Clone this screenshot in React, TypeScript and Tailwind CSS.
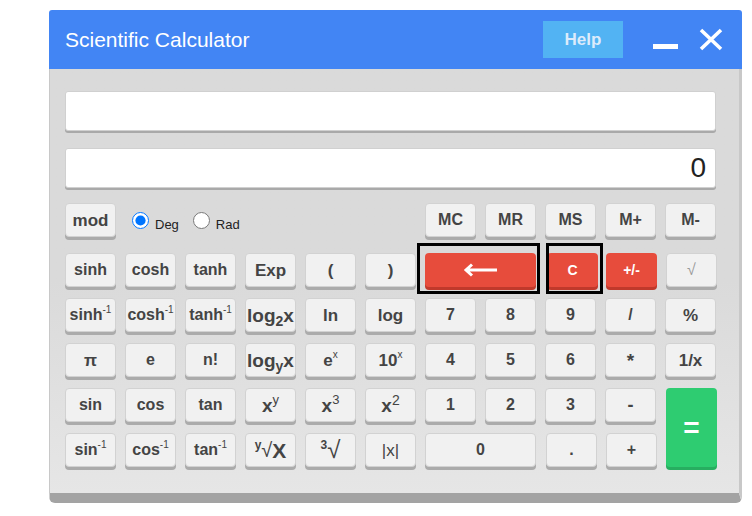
import React from "react";

const key =
  "h-[34px] w-full rounded-[4px] border border-[#d2d2d2] bg-[#f1f1f1] text-[#444] font-bold text-[16px] shadow-[0_3px_0_#ababab] flex items-center justify-center leading-none";

function Key({ children, className = "" }: { children: React.ReactNode; className?: string }) {
  return <button className={`${key} ${className}`}>{children}</button>;
}

function RedKey({ children, className = "" }: { children: React.ReactNode; className?: string }) {
  return (
    <button
      className={`h-[34px] w-full rounded-[4px] bg-[#e74c3c] text-white font-bold text-[14px] shadow-[0_3px_0_#c0392b] flex items-center justify-center leading-none ${className}`}
    >
      {children}
    </button>
  );
}

const Sup = ({ children }: { children: React.ReactNode }) => (
  <sup className="text-[10px] font-normal relative -top-[5px]">{children}</sup>
);

export default function App() {
  return (
    <div className="w-[752px] h-[516px] bg-white font-['Liberation_Sans',Arial,sans-serif] pt-[10px] pl-[49px]">
      <div className="w-[693px] rounded-t-[3px] overflow-hidden">
        {/* title bar */}
        <div className="h-[59px] bg-[#4285f4] flex items-center pl-4 pr-[19px]">
          <h1 className="text-white text-[21px]">Scientific Calculator</h1>
          <button className="ml-auto w-[80px] h-[37px] bg-[#52b3f3] text-[#dcebfb] font-bold text-[17px]">
            Help
          </button>
          <div className="ml-[30px] w-[25px] h-[5px] bg-white mt-[14px]" />
          <svg className="ml-[21px]" width="24" height="23" viewBox="0 0 24 23">
            <path d="M2 2 L22 21 M22 2 L2 21" stroke="white" strokeWidth="3.6" strokeLinecap="butt" />
          </svg>
        </div>

        {/* body */}
        <div className="bg-gradient-to-b from-[#dadada] via-[#dadada] to-[#e6e6e6] border-l border-r-[3px] border-[#c8c8c8] border-b-[10px] border-b-[#a3a3a3] rounded-b-[6px] pl-[15px] pr-[23px] pt-[22px] pb-[26px]">
          <div className="h-[40px] bg-white rounded-[3px] border border-[#d0d0d0] shadow-[0_2px_0_#a9a9a9]" />
          <div className="mt-[17px] h-[40px] bg-white rounded-[3px] border border-[#d0d0d0] shadow-[0_2px_0_#a9a9a9] flex items-center justify-end pr-[9px] text-[28px] text-[#222]">
            0
          </div>

          {/* memory row */}
          <div className="mt-[15px] grid grid-cols-[repeat(11,51px)] gap-x-[9px]">
            <Key className="text-[17px]">mod</Key>
            <div className="col-span-3 flex items-center pl-[7px] text-[13px] text-[#222]">
              <input type="radio" name="unit" defaultChecked className="w-[17px] h-[17px] m-0" />
              <span className="ml-[6px] mt-[9px]">Deg</span>
              <input type="radio" name="unit" className="ml-[14px] w-[17px] h-[17px] m-0" />
              <span className="ml-[6px] mt-[9px]">Rad</span>
            </div>
            <Key className="col-start-7">MC</Key>
            <Key>MR</Key>
            <Key>MS</Key>
            <Key>M+</Key>
            <Key>M-</Key>
          </div>

          {/* main keys */}
          <div className="mt-[16px] grid grid-cols-[repeat(11,51px)] gap-x-[9px] gap-y-[11px]">
            <Key>sinh</Key>
            <Key>cosh</Key>
            <Key>tanh</Key>
            <Key className="text-[17px]">Exp</Key>
            <Key className="text-[17px]">(</Key>
            <Key className="text-[17px]">)</Key>
            <div className="col-span-2 relative">
              <RedKey>
                <svg width="36" height="14" viewBox="0 0 36 14">
                  <path d="M3 7 H34 M9 1.5 L3 7 L9 12.5" stroke="white" strokeWidth="3" fill="none" />
                </svg>
              </RedKey>
              <div className="absolute top-[-10px] bottom-[-7px] left-[-8px] right-[-4px] border-[3px] border-black pointer-events-none" />
            </div>
            <div className="relative">
              <RedKey className="ml-[2px] w-[52px]">C</RedKey>
              <div className="absolute top-[-10px] bottom-[-7px] left-[1px] right-[-7px] border-[3px] border-black pointer-events-none" />
            </div>
            <RedKey className="ml-[1px]">+/-</RedKey>
            <Key className="ml-[1px] font-normal text-[#999] text-[15px]">√</Key>

            <Key className="text-[15px]">
              sinh<Sup>-1</Sup>
            </Key>
            <Key className="text-[15px]">
              cosh<Sup>-1</Sup>
            </Key>
            <Key className="text-[15px]">
              tanh<Sup>-1</Sup>
            </Key>
            <Key className="text-[19px]">
              log<sub className="text-[14px] relative top-[6px]">2</sub>x
            </Key>
            <Key className="text-[17px]">ln</Key>
            <Key className="text-[17px]">log</Key>
            <Key>7</Key>
            <Key>8</Key>
            <Key>9</Key>
            <Key>/</Key>
            <Key className="text-[17px]">%</Key>

            <Key className="text-[17px]">π</Key>
            <Key>e</Key>
            <Key>n!</Key>
            <Key className="text-[19px]">
              log<sub className="text-[14px] relative top-[6px]">y</sub>x
            </Key>
            <Key className="text-[17px]">
              e<Sup>x</Sup>
            </Key>
            <Key className="text-[17px]">
              10<Sup>x</Sup>
            </Key>
            <Key>4</Key>
            <Key>5</Key>
            <Key>6</Key>
            <Key className="text-[19px]">*</Key>
            <Key className="text-[17px]">1/x</Key>

            <Key>sin</Key>
            <Key>cos</Key>
            <Key>tan</Key>
            <Key className="text-[19px]">
              x<sup className="text-[13px] font-normal relative -top-[5px]">y</sup>
            </Key>
            <Key className="text-[19px]">
              x<sup className="text-[13px] font-normal relative -top-[5px]">3</sup>
            </Key>
            <Key className="text-[19px]">
              x<sup className="text-[14px] font-normal relative -top-[5px]">2</sup>
            </Key>
            <Key>1</Key>
            <Key>2</Key>
            <Key>3</Key>
            <Key className="text-[18px]">-</Key>
            <button className="ml-[1px] row-span-2 w-full h-full rounded-[4px] bg-[#2ecc71] text-white font-bold text-[28px] shadow-[0_3px_0_#27ae60] flex items-center justify-center">
              =
            </button>

            <Key className="text-[15px]">
              sin<Sup>-1</Sup>
            </Key>
            <Key className="text-[15px]">
              cos<Sup>-1</Sup>
            </Key>
            <Key className="text-[15px]">
              tan<Sup>-1</Sup>
            </Key>
            <Key className="text-[21px]">
              <span className="text-[12px] self-start mt-[5px]">y</span>
              <span className="text-[20px] font-normal">√</span>
              <span>X</span>
            </Key>
            <Key className="text-[24px] font-normal">
              <span className="text-[12px] font-bold self-start mt-[5px]">3</span>
              <span>√</span>
            </Key>
            <Key className="font-normal text-[17px]">|x|</Key>
            <Key className="col-span-2">0</Key>
            <Key className="ml-[1px]">.</Key>
            <Key className="ml-[1px]">+</Key>
          </div>
        </div>
      </div>
    </div>
  );
}
